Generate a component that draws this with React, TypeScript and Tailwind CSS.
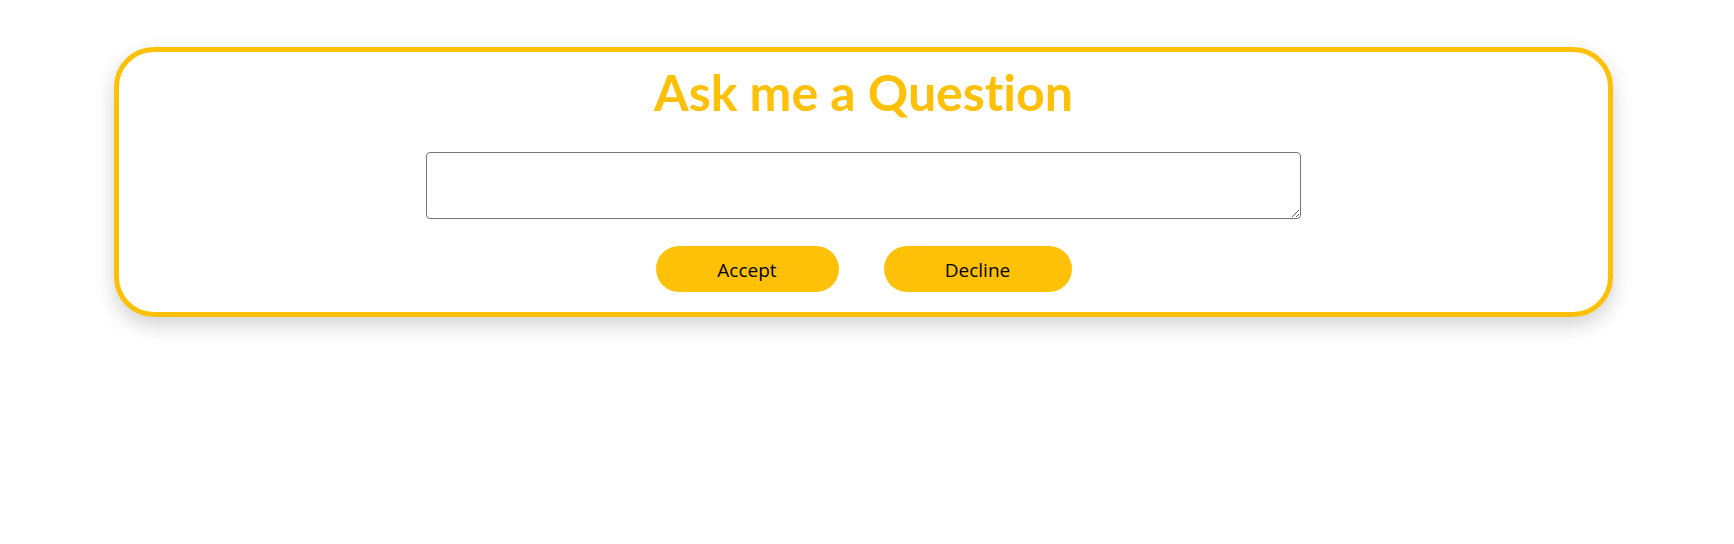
import React from "react";

export default function App() {
  return (
    <div className="w-[1734px] h-[544px] bg-white" style={{ fontFamily: '"Open Sans", "Noto Sans", sans-serif' }}>
      <div className="pt-[47px] pl-[114px]">
        <div className="w-[1499px] h-[270px] border-[5px] border-[#ffc107] rounded-[40px] bg-white shadow-[0_8px_20px_rgba(0,0,0,0.18)] flex flex-col items-center pt-[15px]">
          <h1 className="text-[50px] leading-none font-bold text-[#ffc107] font-['Lato',sans-serif] [font-variant-ligatures:none]">Ask me a Question</h1>
          <textarea className="mt-[35px] w-[875px] h-[67px] border border-[#767676] rounded-[4px] bg-white" />
          <div className="mt-[27px] flex gap-[45px]">
            <button className="h-[46px] w-[183px] pt-[3px] rounded-full bg-[#ffc107] text-[19px] text-black">Accept</button>
            <button className="h-[46px] w-[188px] pt-[3px] rounded-full bg-[#ffc107] text-[19px] text-black">Decline</button>
          </div>
        </div>
      </div>
    </div>
  );
}
